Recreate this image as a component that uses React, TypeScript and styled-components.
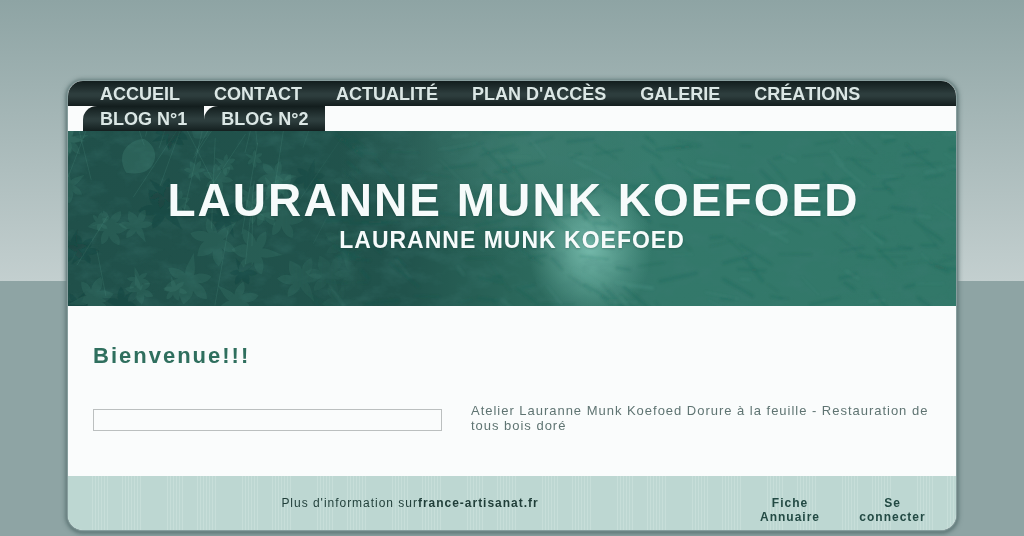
import React from "react";
import styled, { createGlobalStyle } from "styled-components";

const GlobalStyle = createGlobalStyle`
  html, body { margin: 0; padding: 0; height: 100%; }
  body {
    min-height: 536px;
    overflow: hidden;
    font-family: "Liberation Sans", Arial, sans-serif;
    background: linear-gradient(180deg, #8ea4a4 0, #c3cfcf 281px, #8ea4a4 281px, #8ea4a4 100%) no-repeat #8ea4a4;
  }
`;

const Page = styled.div`
  padding-top: 81px;
`;

const Frame = styled.div`
  width: 888px;
  margin: 0 auto;
  border-radius: 15px;
  background: #fafcfc;
  box-shadow: 0 0 1px 1px #8ba1a1, 0 1px 2px 2px #6a8282, 0 1px 4px 3px rgba(80, 105, 105, 0.65);
`;

const FrameClip = styled.div`
  border-radius: 15px;
  overflow: hidden;
  will-change: transform;
`;

const Menu = styled.ul`
  display: flex;
  flex-wrap: wrap;
  list-style: none;
  margin: 0;
  padding: 0 60px 0 15px;
  background: linear-gradient(180deg, #121d1d 0, #2d3d3d 50%, #2d3d3d 60%, #141f1f 100%) no-repeat 0 0 / 100% 25px #fafcfc;
`;

const MenuItem = styled.li`
  height: 25px;
  padding: 0 17px;
  border-top-left-radius: 14px;
  background: linear-gradient(180deg, #121d1d 0, #2d3d3d 50%, #2d3d3d 60%, #141f1f 100%);
  font-size: 18px;
  font-weight: 700;
  line-height: 26px;
  color: #dbe7e5;
  white-space: nowrap;
  font-kerning: none;
`;

const Banner = styled.header`
  position: relative;
  height: 175px;
  overflow: hidden;
  background:
    radial-gradient(ellipse 62px 72px at 522px 118px, rgba(135, 205, 190, 0.78), rgba(135, 205, 190, 0) 100%),
    radial-gradient(ellipse 180px 110px at 450px 20px, rgba(95, 165, 150, 0.32), rgba(95, 165, 150, 0) 100%),
    linear-gradient(90deg, #20504a 0, #21534c 38%, #2a665a 50%, #33786a 66%, #327869 100%);
`;

const BannerArt = styled.svg`
  position: absolute;
  inset: 0;
  width: 100%;
  height: 100%;
`;

const BannerText = styled.div`
  position: relative;
  display: flex;
  flex-direction: column;
  align-items: center;
  padding-top: 43px;
  color: #f6fbfb;
  text-shadow: 0 1px 2px rgba(10, 40, 35, 0.25);
`;

const Title = styled.h1`
  margin: 0;
  padding-left: 3px;
  font-size: 46px;
  line-height: 52px;
  font-weight: 700;
  letter-spacing: 2.05px;
`;

const Subtitle = styled.h2`
  margin: 0;
  font-size: 23px;
  line-height: 28px;
  font-weight: 700;
  letter-spacing: 1px;
`;

const Content = styled.main`
  height: 170px;
  box-sizing: border-box;
  padding: 37px 25px 0;
`;

const Heading = styled.h3`
  margin: 0 0 34px;
  font-size: 22px;
  line-height: 26px;
  font-weight: 700;
  letter-spacing: 2px;
  color: #2f6f5e;
`;

const Intro = styled.div`
  display: grid;
  grid-template-columns: 349px 1fr;
  column-gap: 29px;
  align-items: start;
`;

const EmptyBox = styled.div`
  height: 22px;
  margin-top: 6px;
  box-sizing: border-box;
  border: 1px solid #bbbfbf;
`;

const IntroText = styled.p`
  margin: 0;
  font-size: 13px;
  line-height: 15px;
  letter-spacing: 0.98px;
  color: #5f7472;
`;

const Footer = styled.footer`
  display: grid;
  grid-template-columns: 1fr 102px 103px;
  height: 54px;
  box-sizing: border-box;
  padding: 20px 12px 0 13px;
  font-size: 12px;
  line-height: 14px;
  letter-spacing: 1px;
  color: #1f3d38;
  background:
    repeating-linear-gradient(90deg, #bdd7d2 0 24px, rgba(189, 215, 210, 0) 24px 41px, #bdd7d2 41px 53px, rgba(189, 215, 210, 0) 53px 75px),
    repeating-linear-gradient(90deg, #c7ded9 0 1px, #bdd7d2 1px 3px);
`;

const Notice = styled.div`
  text-align: center;
  letter-spacing: 0.98px;
`;

const FooterLink = styled.div`
  padding: 0 12px;
  text-align: center;
  font-weight: 700;
  color: #234a44;
`;

const menu = ["ACCUEIL", "CONTACT", "ACTUALITÉ", "PLAN D'ACCÈS", "GALERIE", "CRÉATIONS", "BLOG N°1", "BLOG N°2"];

const leaf =
  "M0 -24 C5 -18 7 -14 6 -10 C10 -15 15 -16 20 -15 C19 -9 15 -4 9 -2 C14 -2 18 1 20 6 C14 8 8 7 4 4 C5 9 3 13 0 24 C-3 13 -5 9 -4 4 C-8 7 -14 8 -20 6 C-18 1 -14 -2 -9 -2 C-15 -4 -19 -9 -20 -15 C-15 -16 -10 -15 -6 -10 C-7 -14 -5 -18 0 -24 Z";
const smooth = "M0 -20 C14 -18 22 -6 18 6 C15 16 4 20 -6 22 C-16 14 -20 2 -14 -8 C-10 -14 -6 -18 0 -20 Z";

function seeded(seed: number) {
  let s = seed;
  return () => {
    s = (s * 16807) % 2147483647;
    return s / 2147483647;
  };
}

const rand = seeded(4242);

const leaves = Array.from({ length: 44 }, (_, i) => {
  const x = rand() * 290;
  const y = rand() * 175;
  return { x, y, s: 0.4 + rand() * 0.7, r: rand() * 360, light: i % 4 !== 0 };
});

const stems = Array.from({ length: 26 }, () => {
  const x = rand() * 270;
  const y = rand() * 175;
  const a = 0.9 + rand() * 1.2;
  const l = 40 + rand() * 70;
  return { x, y, x2: x + Math.cos(a) * l, y2: y - Math.sin(a) * l };
});

const brush = Array.from({ length: 260 }, () => {
  const x = 240 + rand() * 660;
  const y = rand() * 175;
  const a = (rand() < 0.6 ? -0.3 : 0.45) + rand() * 0.5;
  const l = 8 + rand() * 30;
  return { x, y, x2: x + Math.cos(a) * l, y2: y + Math.sin(a) * l, w: 1 + rand() * 3, dark: rand() < 0.75 };
});

function BannerPicture() {
  return (
    <BannerArt viewBox="0 0 888 175" preserveAspectRatio="none" aria-hidden="true">
      <defs>
        <filter id="mottle" x="0" y="0" width="100%" height="100%">
          <feTurbulence type="fractalNoise" baseFrequency="0.035 0.06" numOctaves="5" seed="7" />
          <feColorMatrix values="0 0 0 0 0.05  0 0 0 0 0.2  0 0 0 0 0.18  1.8 0 0 0 -0.8" />
        </filter>
        <filter id="soft">
          <feGaussianBlur stdDeviation="1.1" />
        </filter>
        <filter id="softLeaf">
          <feGaussianBlur stdDeviation="0.6" />
        </filter>
        <linearGradient id="fade" x1="0" x2="1" y1="0" y2="0">
          <stop offset="0" stopColor="#fff" />
          <stop offset="0.24" stopColor="#fff" />
          <stop offset="0.34" stopColor="#000" />
        </linearGradient>
        <mask id="leafMask">
          <rect width="888" height="175" fill="url(#fade)" />
        </mask>
      </defs>
      <rect width="888" height="175" filter="url(#mottle)" opacity="0.4" />
      <g filter="url(#soft)">
        {brush.map((b, i) => (
          <line
            key={i}
            x1={b.x}
            y1={b.y}
            x2={b.x2}
            y2={b.y2}
            stroke={b.dark ? "#1b5a4e" : "#62a898"}
            strokeWidth={b.w}
            strokeLinecap="round"
            opacity={b.dark ? 0.16 : 0.1}
          />
        ))}
      </g>
      <g mask="url(#leafMask)" filter="url(#softLeaf)">
        {stems.map((l, i) => (
          <line key={i} x1={l.x} y1={l.y} x2={l.x2} y2={l.y2} stroke="#5a9e8f" strokeWidth="0.8" opacity="0.22" />
        ))}
        {leaves.map((l, i) => (
          <path
            key={i}
            d={leaf}
            transform={`translate(${l.x} ${l.y}) rotate(${l.r}) scale(${l.s})`}
            fill={l.light ? "#4e9284" : "#123a35"}
            opacity={l.light ? 0.17 : 0.22}
          />
        ))}
        <path d={smooth} transform="translate(133 -2) rotate(20) scale(0.5)" fill="#4e9284" opacity="0.16" />
        <path d={smooth} transform="translate(70 25) rotate(20) scale(0.9)" fill="#4e9284" opacity="0.26" />
      </g>
    </BannerArt>
  );
}

export default function App() {
  return (
    <Page>
      <GlobalStyle />
      <Frame>
        <FrameClip>
          <Menu>
            {menu.map((label) => (
              <MenuItem key={label}>{label}</MenuItem>
            ))}
          </Menu>
          <Banner>
            <BannerPicture />
            <BannerText>
              <Title>LAURANNE MUNK KOEFOED</Title>
              <Subtitle>LAURANNE MUNK KOEFOED</Subtitle>
            </BannerText>
          </Banner>
          <Content>
            <Heading>Bienvenue!!!</Heading>
            <Intro>
              <EmptyBox />
              <IntroText>Atelier Lauranne Munk Koefoed Dorure à la feuille - Restauration de tous bois doré</IntroText>
            </Intro>
          </Content>
          <Footer>
            <Notice>
              Plus d'information sur<b>france-artisanat.fr</b>
            </Notice>
            <FooterLink>Fiche Annuaire</FooterLink>
            <FooterLink>Se connecter</FooterLink>
          </Footer>
        </FrameClip>
      </Frame>
    </Page>
  );
}
